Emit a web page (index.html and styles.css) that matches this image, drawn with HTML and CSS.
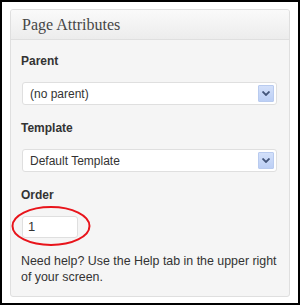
FILE: index.html
```html
<!DOCTYPE html>
<html>
<head>
<meta charset="utf-8">
<link rel="stylesheet" href="styles.css">
</head>
<body>
<div class="frame">
  <div class="panel">
    <div class="panel-head"><h3 class="title">Page Attributes</h3></div>
    <div class="panel-body">
      <p class="label">Parent</p>
      <div class="select">
        <span class="select-text">(no parent)</span>
        <span class="select-btn"><svg width="8" height="5" viewBox="0 0 8 5"><path d="M0.5 0.5 L4 4 L7.5 0.5" fill="none" stroke="#43557a" stroke-width="1.8"/></svg></span>
      </div>
      <p class="label label-gap">Template</p>
      <div class="select">
        <span class="select-text">Default Template</span>
        <span class="select-btn"><svg width="8" height="5" viewBox="0 0 8 5"><path d="M0.5 0.5 L4 4 L7.5 0.5" fill="none" stroke="#43557a" stroke-width="1.8"/></svg></span>
      </div>
      <p class="label label-gap">Order</p>
      <div class="order-wrap">
        <div class="order-input">1</div>
        <svg class="circle" width="80" height="42" viewBox="0 0 80 42"><ellipse cx="40" cy="21" rx="38.5" ry="19" fill="none" stroke="#e8141b" stroke-width="2"/></svg>
      </div>
      <p class="help">Need help? Use the Help tab in the upper right of your screen.</p>
    </div>
  </div>
</div>
</body>
</html>
```
FILE: styles.css
```css
html, body {
  margin: 0;
  padding: 0;
  background: #fff;
}
.frame {
  box-sizing: border-box;
  width: 300px;
  height: 305px;
  border: 2px solid #000;
  padding: 7px 8px 0 8px;
}
.panel {
  box-sizing: border-box;
  height: 288px;
  border: 1px solid #dfdfdf;
  border-radius: 3px;
  background: #f5f5f5;
  overflow: hidden;
}
.panel-head {
  height: 29px;
  border-bottom: 1px solid #dfdfdf;
  background: linear-gradient(#fafafa, #ececec);
  display: flex;
  align-items: center;
  padding-left: 11px;
}
.title {
  margin: 0;
  font-family: "Liberation Serif", "Times New Roman", serif;
  font-weight: normal;
  font-size: 16px;
  color: #464646;
}
.panel-body {
  padding: 13px 12px 0 10px;
  font-family: "Liberation Sans", Arial, sans-serif;
  color: #333;
}
.label {
  margin: 0 0 13px 0;
  font-weight: bold;
  font-size: 12px;
  line-height: 16px;
}
.label-gap {
  margin-top: 15px;
}
.select {
  box-sizing: border-box;
  margin-left: 1px;
  height: 23px;
  border: 1px solid #dfdfdf;
  border-radius: 3px;
  background: #fff;
  display: flex;
  align-items: center;
  justify-content: space-between;
  padding: 0 2px 0 7px;
  font-size: 12px;
}
.select-btn {
  box-sizing: border-box;
  width: 16px;
  height: 17px;
  border: 1px solid #b9cbef;
  border-radius: 1px;
  background: linear-gradient(#d3e0fa, #bccff5);
  display: flex;
  align-items: center;
  justify-content: center;
}
.order-wrap {
  position: relative;
  margin-left: 1px;
  height: 22px;
}
.order-input {
  box-sizing: border-box;
  width: 56px;
  height: 22px;
  border: 1px solid #dfdfdf;
  border-radius: 3px;
  background: #fff;
  font-size: 13px;
  line-height: 20px;
  padding-left: 5px;
}
.circle {
  position: absolute;
  left: -11px;
  top: -11px;
}
.help {
  margin: 15px 0 0 0;
  font-size: 12.4px;
  line-height: 16px;
}
```
